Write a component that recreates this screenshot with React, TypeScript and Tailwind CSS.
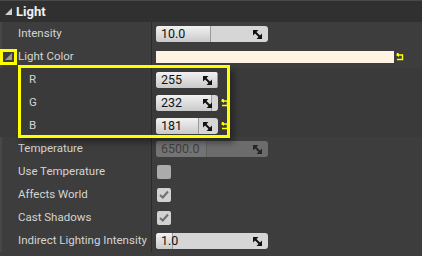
import React from "react";

const DiagIcon = ({ color = "#111" }: { color?: string }) => (
  <svg width="9" height="9" viewBox="0 0 9 9">
    <polygon points="0,0 5.5,0 0,5.5" fill={color} />
    <polygon points="9,9 3.5,9 9,3.5" fill={color} />
    <line x1="1" y1="1" x2="8" y2="8" stroke={color} strokeWidth="2" />
  </svg>
);

const ResetIcon = () => (
  <svg width="8" height="9" viewBox="0 0 8 9">
    <polyline points="1.5,1 1.5,3 6.5,3 6.5,7.5 1,7.5" fill="none" stroke="#ffff00" strokeWidth="1.4" />
    <polygon points="0,3 3,1 3,5" fill="#ffff00" />
  </svg>
);

const Expander = ({ color }: { color: string }) => (
  <svg width="7" height="7" viewBox="0 0 7 7">
    <polygon points="7,0 7,7 0,7" fill={color} />
  </svg>
);

type SpinProps = { value: string; width: number; fill: number; disabled?: boolean };

const SpinBox = ({ value, width, fill, disabled }: SpinProps) => (
  <div
    className={`relative h-[16px] rounded-[3px] overflow-hidden ${
      disabled ? "bg-[#6c6c6c]" : "bg-[#d6d6d6]"
    }`}
    style={{ width }}
  >
    <div
      className={`absolute left-0 top-0 h-full border-r ${
        disabled
          ? "bg-[#737373] border-[#5e5e5e]"
          : "bg-gradient-to-b from-[#f2f2f2] to-[#c9c9c9] border-[#9a9a9a]"
      }`}
      style={{ width: fill }}
    />
    <span
      className={`absolute left-[5px] top-0 leading-[16px] text-[12.5px] ${
        disabled ? "text-[#404040]" : "text-[#111]"
      }`}
    >
      {value}
    </span>
    <span className="absolute right-[6px] top-[4px] flex">
      <DiagIcon color={disabled ? "#262626" : "#111"} />
    </span>
  </div>
);

const CheckBox = ({ checked, dim }: { checked?: boolean; dim?: boolean }) => (
  <div
    className={`ml-[1px] w-[14px] h-[14px] rounded-[2px] flex items-center justify-center ${
      dim ? "bg-[#ababab]" : "bg-[#d2d2d2]"
    }`}
  >
    {checked && (
      <svg width="10" height="9" viewBox="0 0 10 9">
        <polyline points="1,5 3.8,7.5 9,1.5" fill="none" stroke="#6e6e6e" strokeWidth="2" />
      </svg>
    )}
  </div>
);

const Row = ({
  label,
  indent,
  expander,
  children,
}: {
  label: string;
  indent?: boolean;
  expander?: boolean;
  children?: React.ReactNode;
}) => (
  <div className="flex h-[23px]">
    <div className={`w-[151px] flex items-center ${indent ? "pl-[29px]" : expander ? "pl-[5px]" : "pl-[18px]"}`}>
      {expander && (
        <span className="mr-[6px] flex">
          <Expander color="#9a9a9a" />
        </span>
      )}
      <span className="text-[11.5px] text-[#d4d4d4] whitespace-nowrap">{label}</span>
    </div>
    <div className="w-px bg-[#2b2b2b]" />
    <div className="flex-1 flex items-center pl-[4px]">{children}</div>
  </div>
);

export default function App() {
  return (
    <div
      className="relative w-[422px] h-[256px] bg-[#3d3d3d] overflow-hidden"
      style={{ fontFamily: "Roboto, 'Liberation Sans', sans-serif" }}
    >
      <div className="h-[22px] bg-[#303030] border-t border-[#4a4a4a] flex items-center pl-[5px]">
        <span className="mr-[4px] flex">
          <Expander color="#cfcfcf" />
        </span>
        <span className="text-[13px] font-bold text-[#f0f0f0]">Light</span>
      </div>

      <div className="flex">
        <div className="w-[2px] bg-[#474747]" />
        <div className="flex-1 -ml-[2px]">
          <Row label="Intensity">
            <SpinBox value="10.0" width={112} fill={55} />
          </Row>
          <Row label="Light Color" expander>
            <div className="w-[238px] h-[12px] bg-[#fff4e3]" />
            <span className="ml-[2px] flex">
              <ResetIcon />
            </span>
          </Row>
          <div className="bg-[#3a3a3a]">
            <Row label="R" indent>
              <SpinBox value="255" width={62} fill={62} />
            </Row>
            <Row label="G" indent>
              <SpinBox value="232" width={62} fill={56} />
              <span className="ml-[3px] flex">
                <ResetIcon />
              </span>
            </Row>
            <Row label="B" indent>
              <SpinBox value="181" width={62} fill={43} />
              <span className="ml-[3px] flex">
                <ResetIcon />
              </span>
            </Row>
          </div>
          <Row label="Temperature">
            <SpinBox value="6500.0" width={112} fill={51} disabled />
          </Row>
          <Row label="Use Temperature">
            <CheckBox dim />
          </Row>
          <Row label="Affects World">
            <CheckBox checked />
          </Row>
          <Row label="Cast Shadows">
            <CheckBox checked />
          </Row>
          <Row label="Indirect Lighting Intensity">
            <SpinBox value="1.0" width={112} fill={17} />
          </Row>
        </div>
      </div>

      {/* annotation highlights */}
      <div className="absolute left-0 top-[49px] w-[17px] h-[16px] border-[3px] border-[#ffff00]" />
      <div className="absolute left-[18px] top-[65px] w-[212px] h-[73px] border-[3px] border-[#ffff00] shadow-[4px_5px_6px_rgba(0,0,0,0.35)]" />
    </div>
  );
}
